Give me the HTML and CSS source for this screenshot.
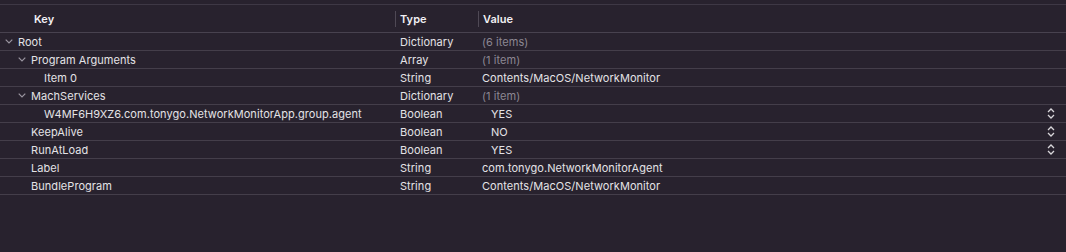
FILE: index.html
```html
<!DOCTYPE html>
<html>
<head>
  <meta charset="UTF-8">
  <title>Info.plist</title>
  <link rel="stylesheet" href="styles.css">
</head>
<body>
  <div class="plist">
    <div class="header">
      <div class="col key-head">Key</div>
      <div class="col type-head">Type</div>
      <div class="col value-head">Value</div>
    </div>

    <div class="row">
      <div class="col key lvl0"><span class="chev"><svg width="8" height="5" viewBox="0 0 8 5"><path d="M0.7 0.7 L4 4 L7.3 0.7" /></svg></span>Root</div>
      <div class="col type">Dictionary</div>
      <div class="col value muted">(6 items)</div>
    </div>
    <div class="row">
      <div class="col key lvl1"><span class="chev"><svg width="8" height="5" viewBox="0 0 8 5"><path d="M0.7 0.7 L4 4 L7.3 0.7" /></svg></span>Program Arguments</div>
      <div class="col type">Array</div>
      <div class="col value muted">(1 item)</div>
    </div>
    <div class="row">
      <div class="col key lvl2">Item 0</div>
      <div class="col type">String</div>
      <div class="col value">Contents/MacOS/NetworkMonitor</div>
    </div>
    <div class="row">
      <div class="col key lvl1"><span class="chev"><svg width="8" height="5" viewBox="0 0 8 5"><path d="M0.7 0.7 L4 4 L7.3 0.7" /></svg></span>MachServices</div>
      <div class="col type">Dictionary</div>
      <div class="col value muted">(1 item)</div>
    </div>
    <div class="row">
      <div class="col key lvl2">W4MF6H9XZ6.com.tonygo.NetworkMonitorApp.group.agent</div>
      <div class="col type">Boolean</div>
      <div class="col value popup">YES<span class="stepper"><svg width="8" height="11" viewBox="0 0 8 11"><path d="M1 4 L4 1 L7 4 M1 7 L4 10 L7 7" /></svg></span></div>
    </div>
    <div class="row">
      <div class="col key lvl1x">KeepAlive</div>
      <div class="col type">Boolean</div>
      <div class="col value popup">NO<span class="stepper"><svg width="8" height="11" viewBox="0 0 8 11"><path d="M1 4 L4 1 L7 4 M1 7 L4 10 L7 7" /></svg></span></div>
    </div>
    <div class="row">
      <div class="col key lvl1x">RunAtLoad</div>
      <div class="col type">Boolean</div>
      <div class="col value popup">YES<span class="stepper"><svg width="8" height="11" viewBox="0 0 8 11"><path d="M1 4 L4 1 L7 4 M1 7 L4 10 L7 7" /></svg></span></div>
    </div>
    <div class="row">
      <div class="col key lvl1x">Label</div>
      <div class="col type">String</div>
      <div class="col value">com.tonygo.NetworkMonitorAgent</div>
    </div>
    <div class="row">
      <div class="col key lvl1x">BundleProgram</div>
      <div class="col type">String</div>
      <div class="col value">Contents/MacOS/NetworkMonitor</div>
    </div>
  </div>
</body>
</html>
```

FILE: styles.css
```css
body {
  margin: 0;
  background-color: #28222e;
  font-family: "Inter", "Liberation Sans", sans-serif;
  font-size: 11px;
  letter-spacing: 0.05px;
  color: #e4e2e6;
}

.plist {
  padding-top: 4px;
}

.header {
  display: grid;
  grid-template-columns: 395px 83px 1fr;
  height: 27px;
  border-top: 1px solid #3e3845;
  border-bottom: 1px solid #48424f;
  align-items: center;
  font-weight: 600;
  color: #f2f0f4;
}

.type-head, .value-head {
  border-left: 1px solid #4f4955;
  line-height: 16px;
}

.key-head {
  padding-left: 34px;
}
.type-head {
  padding-left: 4px;
}
.value-head {
  padding-left: 4px;
}

.row {
  display: grid;
  grid-template-columns: 395px 83px 1fr;
  height: 17px;
  border-bottom: 1px solid #443e4a;
  align-items: center;
}

.col {
  white-space: nowrap;
}

.key {
  display: flex;
  align-items: center;
}
.lvl0 { padding-left: 5px; }
.lvl1 { padding-left: 18px; }
.lvl1x { padding-left: 31px; }
.lvl2 { padding-left: 44px; }

.chev {
  display: inline-flex;
  width: 13px;
  align-items: center;
}
.chev svg path {
  fill: none;
  stroke: #9a95a0;
  stroke-width: 1.2;
}

.type {
  padding-left: 5px;
}

.value {
  padding-left: 4px;
}
.muted {
  color: #8c8792;
}

.popup {
  display: flex;
  align-items: center;
  padding-left: 13px;
  padding-right: 11px;
}
.stepper {
  margin-left: auto;
  display: inline-flex;
}
.stepper svg path {
  fill: none;
  stroke: #d8d6da;
  stroke-width: 1.3;
}
```
